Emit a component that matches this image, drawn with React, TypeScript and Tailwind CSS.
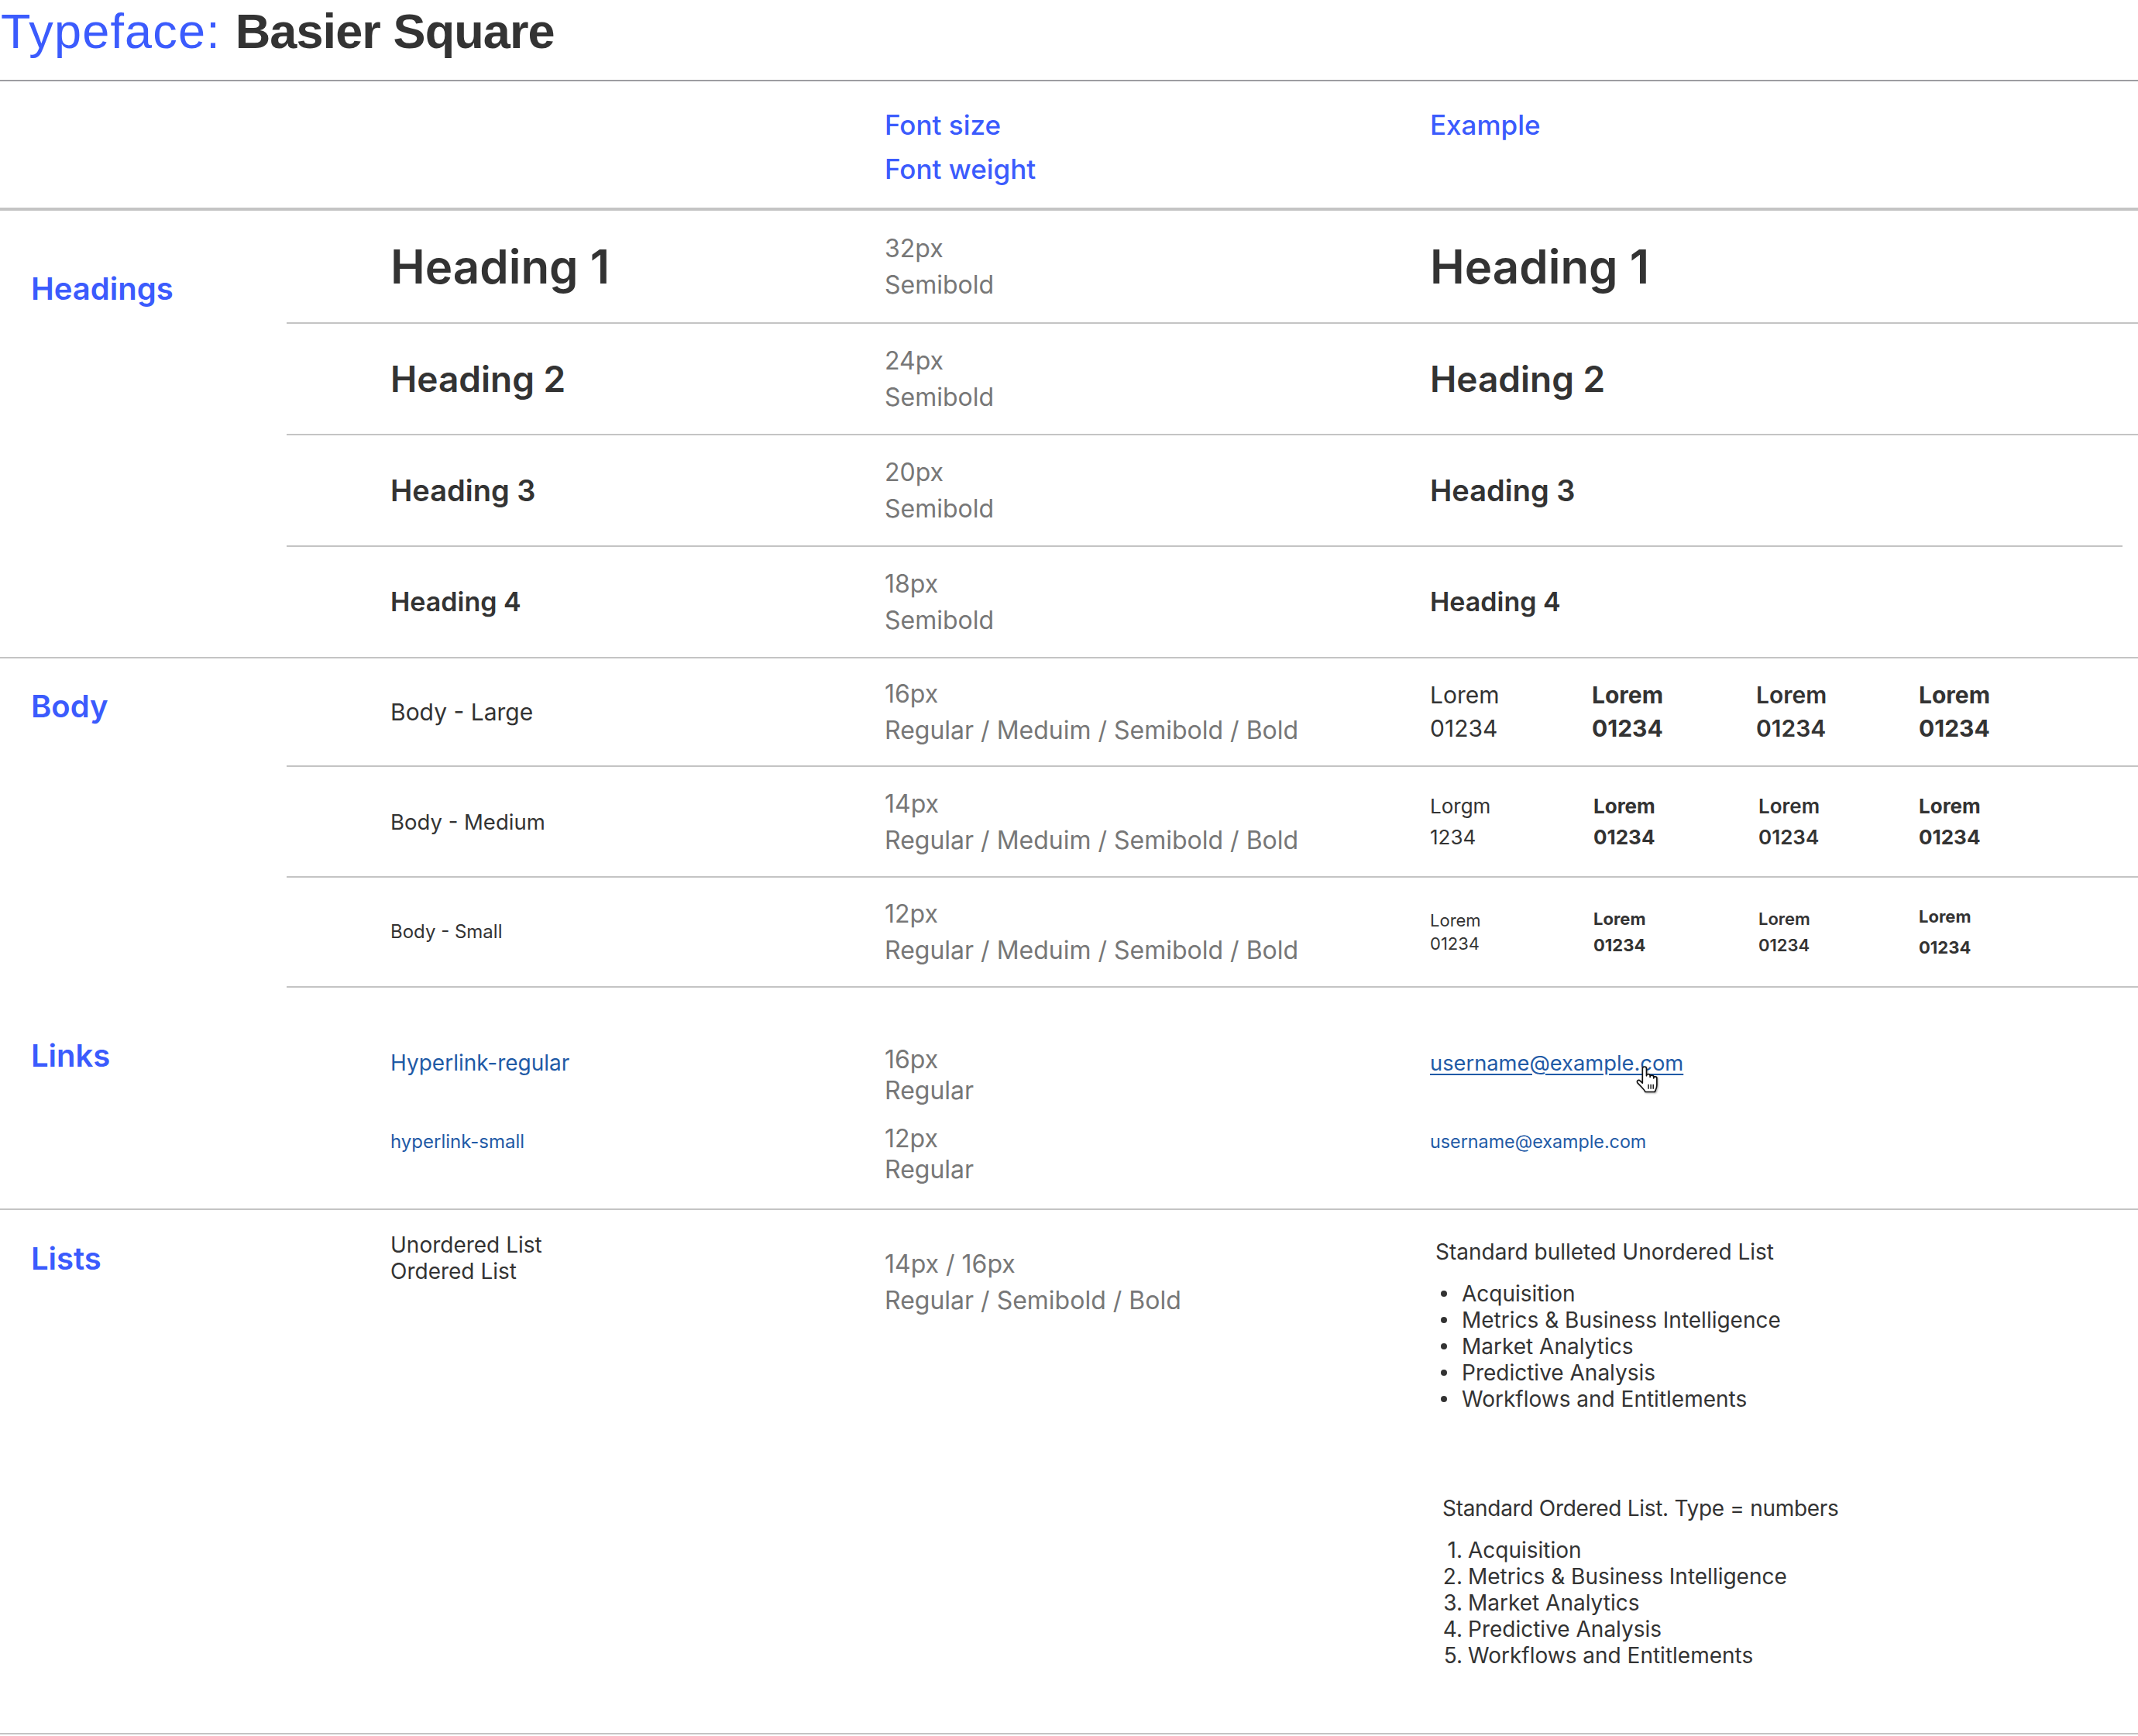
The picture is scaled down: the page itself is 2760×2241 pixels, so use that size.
import React from "react";

function Spec({ lines, leading = "leading-[47px]" }: { lines: string[]; leading?: string }) {
  return (
    <div className={"text-[32px] text-[#777777] " + leading}>
      {lines.map((l) => (
        <div key={l}>{l}</div>
      ))}
    </div>
  );
}

function HandCursor() {
  return (
    <svg width="31" height="35" viewBox="0 0 30 34" className="drop-shadow-[1px_1px_1px_rgba(0,0,0,0.35)]">
      <path
        d="M9 3.5 A2.5 2.5 0 0 1 14 3.5 V12.5 A2.25 2.25 0 0 1 18.5 12.5 V14 A2.25 2.25 0 0 1 23 14 V15.5 A2 2 0 0 1 27 15.5 V24 C27 28 25.5 30 24.5 32.5 H12.5 C11.5 30 9 27.5 6 24.5 L2.8 21.2 A2 2 0 0 1 5.8 18.5 L9 21.5 Z"
        fill="#ffffff"
        stroke="#111111"
        strokeWidth="1.6"
        strokeLinejoin="round"
      />
      <path d="M16.5 23 V29 M19.5 23 V29 M22.5 23 V29" stroke="#111111" strokeWidth="1.4" />
    </svg>
  );
}

const ulItems = [
  "Acquisition",
  "Metrics & Business Intelligence",
  "Market Analytics",
  "Predictive Analysis",
  "Workflows and Entitlements",
];

export default function App() {
  return (
    <div className="w-[2760px] min-h-[2241px] bg-white text-[#333333] font-['Inter',sans-serif]">
      {/* Title */}
      <div className="h-[105px] border-b-2 border-[#9d9da1] pt-[9px]">
        <h1 className="pl-[1px] font-['Liberation_Sans',Arial,sans-serif] text-[63px] leading-[63px]">
          <span className="tracking-[1.2px] text-[#3b5bfd]">Typeface: </span>
          <span className="font-bold tracking-[-0.9px] text-[#333333]">Basier Square</span>
        </h1>
      </div>

      {/* Column headers */}
      <div className="flex h-[167px] border-b-4 border-[#c4c4c4] text-[35px] leading-[57px] font-medium text-[#3b5bfd]">
        <div className="w-[1142px] shrink-0" />
        <div className="w-[704px] shrink-0 pt-[28px]">
          <div>Font size</div>
          <div>Font weight</div>
        </div>
        <div className="pt-[28px]">Example</div>
      </div>

      {/* Headings */}
      <section className="flex border-b-2 border-[#c4c4c4]">
        <div className="w-[370px] shrink-0 pl-[40px] pt-[77px]">
          <h2 className="text-[40px] leading-[48px] font-semibold text-[#3b5bfd]">Headings</h2>
        </div>
        <div className="flex-1">
          <div className="flex h-[146px] items-center border-b-2 border-[#c4c4c4]">
            <div className="w-[772px] shrink-0 pl-[134px] text-[60px] leading-[60px] font-semibold">Heading 1</div>
            <div className="w-[704px] shrink-0">
              <Spec lines={["32px", "Semibold"]} />
            </div>
            <div className="text-[60px] leading-[60px] font-semibold">Heading 1</div>
          </div>
          <div className="flex h-[144px] items-center border-b-2 border-[#c4c4c4]">
            <div className="w-[772px] shrink-0 pl-[134px] text-[46px] leading-[46px] font-semibold">Heading 2</div>
            <div className="w-[704px] shrink-0">
              <Spec lines={["24px", "Semibold"]} />
            </div>
            <div className="text-[46px] leading-[46px] font-semibold">Heading 2</div>
          </div>
          <div className="mr-[20px] flex h-[144px] items-center border-b-2 border-[#c4c4c4]">
            <div className="w-[772px] shrink-0 pl-[134px] text-[38px] leading-[38px] font-semibold">Heading 3</div>
            <div className="w-[704px] shrink-0">
              <Spec lines={["20px", "Semibold"]} />
            </div>
            <div className="text-[38px] leading-[38px] font-semibold">Heading 3</div>
          </div>
          <div className="flex h-[142px] items-center">
            <div className="w-[772px] shrink-0 pl-[134px] text-[34px] leading-[34px] font-semibold">Heading 4</div>
            <div className="w-[704px] shrink-0">
              <Spec lines={["18px", "Semibold"]} />
            </div>
            <div className="text-[34px] leading-[34px] font-semibold">Heading 4</div>
          </div>
        </div>
      </section>

      {/* Body */}
      <section className="flex">
        <div className="w-[370px] shrink-0 pl-[40px] pt-[38px]">
          <h2 className="text-[40px] leading-[48px] font-semibold text-[#3b5bfd]">Body</h2>
        </div>
        <div className="flex-1">
          <div className="flex h-[140px] items-center border-b-2 border-[#c4c4c4]">
            <div className="w-[772px] shrink-0 pl-[134px] text-[30px] leading-[30px]">Body - Large</div>
            <div className="w-[704px] shrink-0">
              <Spec lines={["16px", "Regular / Meduim / Semibold / Bold"]} />
            </div>
            <div className="flex text-[30px] leading-[43px]">
              <div className="w-[209px] font-normal">
                <div>Lorem</div>
                <div>01234</div>
              </div>
              <div className="w-[212px] font-bold">
                <div>Lorem</div>
                <div>01234</div>
              </div>
              <div className="w-[210px] font-semibold">
                <div>Lorem</div>
                <div>01234</div>
              </div>
              <div className="font-bold">
                <div>Lorem</div>
                <div>01234</div>
              </div>
            </div>
          </div>
          <div className="flex h-[143px] items-center border-b-2 border-[#c4c4c4]">
            <div className="w-[772px] shrink-0 pl-[134px] text-[27.5px] leading-[28px]">Body - Medium</div>
            <div className="w-[704px] shrink-0">
              <Spec lines={["14px", "Regular / Meduim / Semibold / Bold"]} />
            </div>
            <div className="flex text-[26px] leading-[40px]">
              <div className="w-[211px] font-normal">
                <div>Lorgm</div>
                <div>1234</div>
              </div>
              <div className="w-[213px] font-bold">
                <div>Lorem</div>
                <div>01234</div>
              </div>
              <div className="w-[207px] font-semibold">
                <div>Lorem</div>
                <div>01234</div>
              </div>
              <div className="font-bold">
                <div>Lorem</div>
                <div>01234</div>
              </div>
            </div>
          </div>
          <div className="flex h-[142px] items-center border-b-2 border-[#c4c4c4]">
            <div className="w-[772px] shrink-0 pl-[134px] text-[24px] leading-[24px]">Body - Small</div>
            <div className="w-[704px] shrink-0">
              <Spec lines={["12px", "Regular / Meduim / Semibold / Bold"]} />
            </div>
            <div className="flex items-center text-[22px]">
              <div className="w-[211px] font-normal leading-[30px]">
                <div>Lorem</div>
                <div>01234</div>
              </div>
              <div className="w-[213px] font-bold leading-[34px]">
                <div>Lorem</div>
                <div>01234</div>
              </div>
              <div className="w-[207px] font-semibold leading-[34px]">
                <div>Lorem</div>
                <div>01234</div>
              </div>
              <div className="font-bold leading-[40px]">
                <div>Lorem</div>
                <div>01234</div>
              </div>
            </div>
          </div>
        </div>
      </section>

      {/* Links */}
      <section className="flex h-[287px] border-b-2 border-[#c4c4c4]">
        <div className="w-[370px] shrink-0 pl-[40px] pt-[64px]">
          <h2 className="text-[40px] leading-[48px] font-semibold text-[#3b5bfd]">Links</h2>
        </div>
        <div className="flex-1 pt-[68px]">
          <div className="flex items-start">
            <div className="w-[772px] shrink-0 pl-[134px] pt-[9px] text-[28px] leading-[40px] text-[#1f5aa6]">
              Hyperlink-regular
            </div>
            <div className="w-[704px] shrink-0 pt-[5px]">
              <Spec lines={["16px", "Regular"]} leading="leading-[40px]" />
            </div>
            <div className="relative flex-1 pt-[10px]">
              <a href="#" className="text-[27.3px] leading-[40px] text-[#1f5aa6] underline decoration-[2px] underline-offset-[4px]">
                username@example.com
              </a>
              <div className="absolute left-[265px] top-[33px]">
                <HandCursor />
              </div>
            </div>
          </div>
          <div className="mt-[18px] flex items-start">
            <div className="w-[772px] shrink-0 pl-[134px] pt-[8px] text-[24px] leading-[40px] text-[#1f5aa6]">
              hyperlink-small
            </div>
            <div className="w-[704px] shrink-0 pt-[4px]">
              <Spec lines={["12px", "Regular"]} leading="leading-[40px]" />
            </div>
            <div className="flex-1 pt-[8px]">
              <a href="#" className="text-[23.3px] leading-[40px] text-[#1f5aa6]">
                username@example.com
              </a>
            </div>
          </div>
        </div>
      </section>

      {/* Lists */}
      <section className="flex h-[677px] border-b-2 border-[#c4c4c4]">
        <div className="w-[370px] shrink-0 pl-[40px] pt-[39px]">
          <h2 className="text-[40px] leading-[48px] font-semibold text-[#3b5bfd]">Lists</h2>
        </div>
        <div className="flex flex-1 items-start">
          <div className="w-[772px] shrink-0 pl-[134px] pt-[28px] text-[28px] leading-[34px]">
            <div>Unordered List</div>
            <div>Ordered List</div>
          </div>
          <div className="w-[704px] shrink-0 pt-[46px]">
            <Spec lines={["14px / 16px", "Regular / Semibold / Bold"]} />
          </div>
          <div className="flex-1 pt-[37px] text-[28px] leading-[34px]">
            <div className="ml-[7px]">Standard bulleted Unordered List</div>
            <ul className="mt-[20px]">
              {ulItems.map((t) => (
                <li key={t} className="flex h-[34px] items-center">
                  <span className="ml-[14px] h-[8px] w-[8px] shrink-0 rounded-full bg-[#333333]" />
                  <span className="ml-[19px]">{t}</span>
                </li>
              ))}
            </ul>
            <div className="ml-[16px] mt-[107px] tracking-[-0.3px]">Standard Ordered List. Type = numbers</div>
            <ol className="mt-[20px]">
              {ulItems.map((t, i) => (
                <li key={t} className="flex h-[34px]">
                  <span className="ml-[16px] w-[26px] shrink-0 text-right">{i + 1}.</span>
                  <span className="ml-[7px]">{t}</span>
                </li>
              ))}
            </ol>
          </div>
        </div>
      </section>
    </div>
  );
}
